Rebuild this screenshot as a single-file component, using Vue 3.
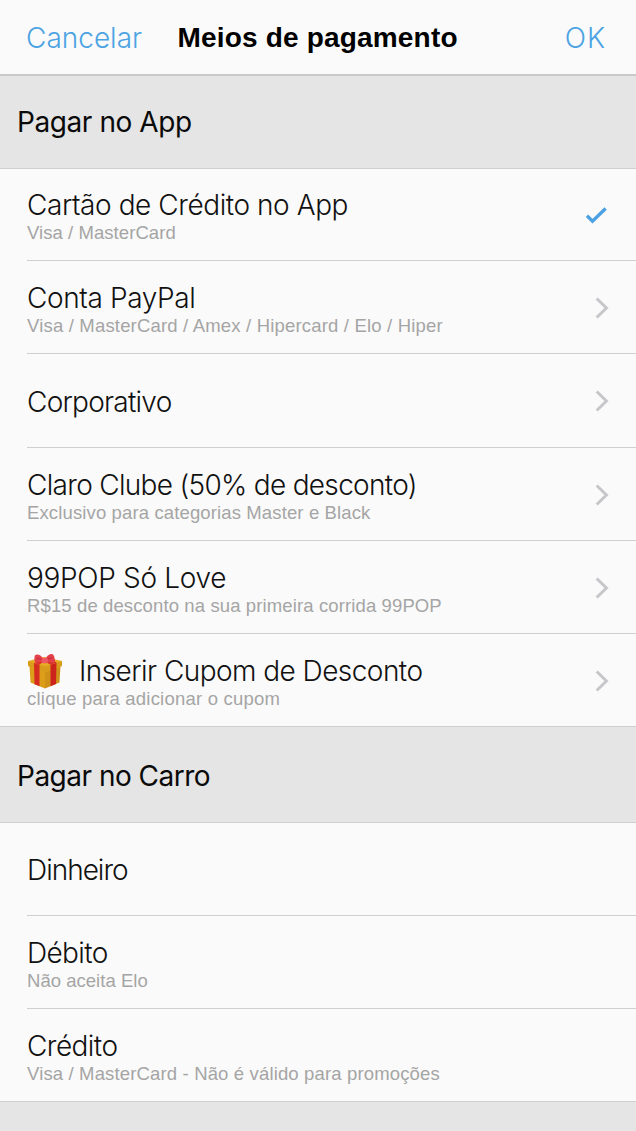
<script setup>
const sections = [
  {
    name: 'Pagar no App',
    kind: 'in-app',
    tracking: -0.42,
    rows: [
      { title: 'Cartão de Crédito no App', ts: -0.43, note: 'Visa / MasterCard', ns: 0.06, mark: 'check' },
      { title: 'Conta PayPal', ts: -0.37, note: 'Visa / MasterCard / Amex / Hipercard / Elo / Hiper', ns: 0.18, mark: 'chevron' },
      { title: 'Corporativo', ts: -0.75, mark: 'chevron' },
      { title: 'Claro Clube (50% de desconto)', ts: -0.69, note: 'Exclusivo para categorias Master e Black', ns: 0.13, mark: 'chevron' },
      { title: '99POP Só Love', ts: -0.32, note: 'R$15 de desconto na sua primeira corrida 99POP', ns: 0.12, mark: 'chevron' },
      { title: 'Inserir Cupom de Desconto', ts: -0.55, note: 'clique para adicionar o cupom', ns: 0.22, mark: 'chevron', gift: true },
    ],
  },
  {
    name: 'Pagar no Carro',
    kind: 'in-car',
    tracking: -0.5,
    rows: [
      { title: 'Dinheiro', ts: -1 },
      { title: 'Débito', ts: -0.63, note: 'Não aceita Elo', ns: 0.03 },
      { title: 'Crédito', ts: -0.55, note: 'Visa / MasterCard - Não é válido para promoções', ns: 0.15 },
    ],
  },
]
const spacing = (v) => ({ letterSpacing: v + 'px' })
</script>

<template>
  <main class="screen">
    <header class="nav">
      <a class="action">Cancelar</a>
      <h1>Meios de pagamento</h1>
      <a class="action ok">OK</a>
    </header>
    <section v-for="s in sections" :key="s.name" :class="s.kind">
      <h2 :style="spacing(s.tracking)">{{ s.name }}</h2>
      <ul>
        <li v-for="r in s.rows" :key="r.title" :class="{ single: !r.note }">
          <div class="text">
            <div class="title" :style="spacing(r.ts)">
              <svg v-if="r.gift" class="gift" viewBox="0 0 36 36">
                <path d="M2.5 13 18 19V35.5L3.5 29.5Z" fill="#dc9d19" />
                <path d="M33.5 13 18 19V35.5L32.5 29.5Z" fill="#cf9118" />
                <path d="M1 8 17 4 35 8 34.5 13 18 19 1.5 13Z" fill="#e7ad27" />
                <path d="M1 8 18 13.5 35 8V13L18 19.5 1 13Z" fill="#d99b1b" />
                <path d="M7 10 12.5 11.7V33.2L7.5 31.2Z" fill="#d52b20" />
                <path d="M23.5 11.7 29.5 9.8 29 31 23.5 33.2Z" fill="#cc241d" />
                <path d="M7 10 13 7 24 5 29.5 9.8 23.5 11.7 17 8 12.5 11.7Z" fill="#d9342b" />
                <path d="M17 7C14 1 8 0 7.5 4C7 8 8 10 10 9.7C13 9.3 15 8 17 7Z" fill="#e4404a" />
                <path d="M18 7C20 1 26 -1 27 3C28 7 29 9 26.5 9.4C23 9.7 20 8.5 18 7Z" fill="#e4404a" />
                <path d="M9.5 6C11 5 14 6 15 7M25.5 5C23 5 21 5.5 20 7" fill="none" stroke="#c22c3c" stroke-width="1" />
                <rect x="14.5" y="4.8" width="6.5" height="5.4" rx="2" fill="#ee5862" />
              </svg>
              <span>{{ r.title }}</span>
            </div>
            <div v-if="r.note" class="note" :style="spacing(r.ns)">{{ r.note }}</div>
          </div>
          <svg v-if="r.mark === 'check'" class="mark" viewBox="0 0 24 24">
            <path d="M2 12.8 7.5 18.2 20.6 5.6" fill="none" stroke="#4ca1e2" stroke-width="3.4" />
          </svg>
          <svg v-if="r.mark === 'chevron'" class="mark" viewBox="0 0 24 24">
            <path d="M11.7 2.5 21.4 12 11.7 21.5" fill="none" stroke="#c7c7cb" stroke-width="3" />
          </svg>
        </li>
      </ul>
    </section>
  </main>
</template>

<style>
body { background: #e5e5e5; }
</style>

<style scoped>
.screen {
  height: 1131px;
  overflow: hidden;
  background: #e5e5e5;
  font-family: Inter, "Liberation Sans", sans-serif;
}
h1, h2, ul { margin: 0; padding: 0; }
.nav {
  box-sizing: border-box;
  height: 76px;
  padding: 20px 30px 0 26px;
  display: grid;
  grid-template-columns: 151.5px 1fr auto;
  align-items: start;
  background: #fafafa;
  border-bottom: 2px solid #c8c8c8;
}
.action {
  font-size: 28px;
  font-weight: 300;
  line-height: 34px;
  padding-top: 1px;
  color: #4ca3e3;
}
.ok { letter-spacing: 0.9px; }
h1 {
  font: 700 28px/34px "Liberation Sans", sans-serif;
  padding-top: 1px;
  letter-spacing: 0.18px;
  color: #000;
}
h2 {
  box-sizing: border-box;
  height: 92px;
  padding: 29px 0 0 17px;
  font-size: 28px;
  font-weight: 400;
  line-height: 34px;
  color: #0a0a0a;
}
.in-car h2 { height: 95.2px; padding-top: 32.3px; }
ul {
  list-style: none;
  background: #fafafa;
  box-shadow: inset 0 1px #cfcfcf;
}
li {
  box-sizing: border-box;
  height: 93.2px;
  margin-left: 27px;
  padding: 20.2px 22px 0 0;
  display: flex;
  justify-content: space-between;
  border-bottom: 1px solid #cfcfcf;
}
li:last-child { margin-left: 0; padding-left: 27px; }
li.single { padding-top: 30.6px; }
.title {
  display: flex;
  align-items: center;
  font-size: 28px;
  font-weight: 300;
  line-height: 34px;
  white-space: nowrap;
  color: #111;
}
.gift { width: 36px; height: 36px; margin: -1px 16px -1px 0; }
.note {
  font: 400 18.5px/22px "Liberation Sans", sans-serif;
  white-space: nowrap;
  color: #a5a5a5;
}
.mark { width: 24px; height: 24px; margin-top: 15px; margin-right: 5px; flex: none; }
.single .mark { margin-top: 4px; }
</style>
